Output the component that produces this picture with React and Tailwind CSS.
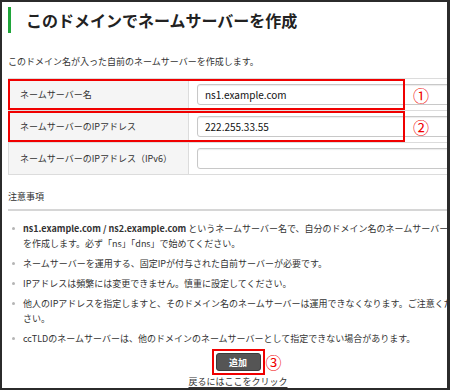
const notes = [
  {
    lines: [
      <>
        <span className="font-bold">ns1.example.com / ns2.example.com</span>{" "}
        というネームサーバー名で、自分のドメイン名のネームサーバー
      </>,
      "を作成します。必ず「ns」「dns」で始めてください。",
    ],
  },
  { lines: ["ネームサーバーを運用する、固定IPが付与された自前サーバーが必要です。"] },
  { lines: ["IPアドレスは頻繁には変更できません。慎重に設定してください。"] },
  {
    lines: [
      "他人のIPアドレスを指定しますと、そのドメイン名のネームサーバーは運用できなくなります。ご注意くだ",
      "さい。",
    ],
  },
  { lines: ["ccTLDのネームサーバーは、他のドメインのネームサーバーとして指定できない場合があります。"] },
];

const rows = [
  { label: "ネームサーバー名", value: "ns1.example.com", mark: "①" },
  { label: "ネームサーバーのIPアドレス", value: "222.255.33.55", mark: "②" },
  { label: "ネームサーバーのIPアドレス（IPv6）", value: "" },
];

export default function App() {
  return (
    <div className="w-[450px] h-[390px] bg-white border-l-2 border-t-2 border-r-[3px] border-b-2 border-[#2b2b2b] overflow-hidden font-['Noto_Sans_CJK_JP','Noto_Sans',sans-serif] text-[#333]">
      <div className="w-[466px] pl-[6px] flex flex-col">
        {/* Heading */}
        <div className="mt-[5px] flex items-center gap-[15px] h-[26px]">
          <div className="w-[3px] h-[26px] bg-[#1fa53a]" />
          <h1 className="text-[16px] leading-[26px] font-bold text-[#222]">
            このドメインでネームサーバーを作成
          </h1>
        </div>

        <p className="mt-[22px] text-[9px] leading-[14px]">
          このドメイン名が入った自前のネームサーバーを作成します。
        </p>

        {/* Form table */}
        <div className="mt-[9px] border-t border-l border-[#dcdcdc] flex flex-col">
          {rows.map((row) => (
            <div key={row.label} className="relative flex h-[32px] border-b border-[#dcdcdc]">
              <div className="w-[180px] shrink-0 bg-[#f5f5f5] border-r border-[#dcdcdc] pl-[11px] flex items-center text-[9px]">
                {row.label}
              </div>
              <div className="flex-1 pl-[8px] flex items-center">
                <div className="w-[262px] h-[21px] border border-[#c8c8c8] rounded-[3px] bg-white shadow-[inset_0_1px_1px_rgba(0,0,0,0.08)] px-[7px] flex items-center text-[10px] text-[#111]">
                  {row.value}
                </div>
              </div>

              {/* Annotation overlay */}
              {row.mark && (
                <div className="absolute inset-y-[0px] left-[-1px] flex items-center gap-[8px] pointer-events-none">
                  <div className="w-[397px] h-[31px] border-2 border-[#f00000]" />
                  <span className="text-[16px] leading-[18px] text-[#f00000]">{row.mark}</span>
                </div>
              )}
            </div>
          ))}
        </div>

        <p className="mt-[15px] text-[9px] leading-[14px]">注意事項</p>
        <div className="mt-[5px] h-[2px] bg-[#d6d6d6]" />

        <ul className="mt-[10px] pl-[4px] flex flex-col gap-[5px]">
          {notes.map((note, i) => (
            <li key={i} className="flex items-start gap-[8px] text-[9px] leading-[15px] whitespace-nowrap">
              <span className="mt-[6px] w-[3px] h-[3px] rounded-full bg-[#b5b5b5] shrink-0" />
              <div className="flex flex-col">
                {note.lines.map((line, j) => (
                  <div key={j}>{line}</div>
                ))}
              </div>
            </li>
          ))}
        </ul>

        {/* Submit */}
        <div className="flex justify-center mt-[3px]">
          <div className="relative flex border-2 border-[#f00000] p-[2px]">
            <button className="w-[45px] h-[18px] rounded-[3px] bg-[#555] border border-[#3a3a3a] text-white text-[9px] font-bold leading-none">
              追加
            </button>
            <span className="absolute left-full top-[2px] ml-[3px] text-[16px] leading-[18px] text-[#f00000]">③</span>
          </div>
        </div>

        <p className="text-center text-[9px] leading-[14px] underline underline-offset-2">
          戻るにはここをクリック
        </p>
      </div>
    </div>
  );
}
